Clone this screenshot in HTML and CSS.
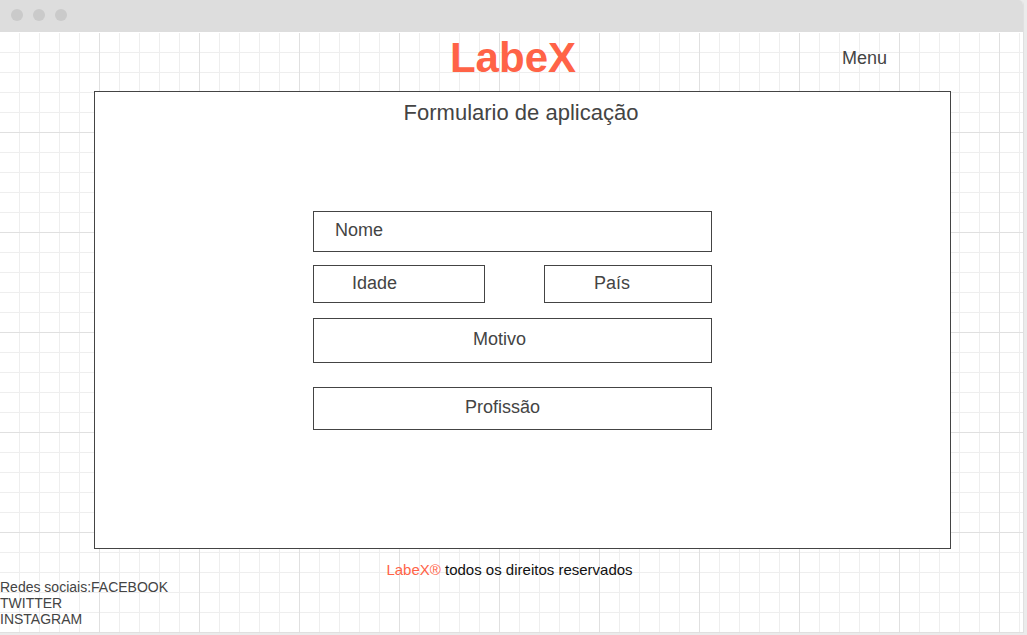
FILE: index.html
```html
<!DOCTYPE html>
<html lang="pt-BR">
<head>
<meta charset="utf-8">
<meta name="viewport" content="width=device-width, initial-scale=1">
<title>LabeX</title>
<link rel="stylesheet" href="styles.css">
</head>
<body>
<div class="window">
  <div class="titlebar">
    <span class="dot"></span>
    <span class="dot"></span>
    <span class="dot"></span>
  </div>
  <div class="page">
    <header class="header">
      <h1 class="logo">LabeX</h1>
      <button class="menu" type="button">Menu</button>
    </header>
    <main class="panel">
      <h2 class="title">Formulario de aplicação</h2>
      <form class="form">
        <input class="field field-name" type="text" placeholder="Nome" aria-label="Nome">
        <div class="row">
          <input class="field field-age" type="text" placeholder="Idade" aria-label="Idade">
          <input class="field field-country" type="text" placeholder="País" aria-label="País">
        </div>
        <input class="field field-reason" type="text" placeholder="Motivo" aria-label="Motivo">
        <input class="field field-job" type="text" placeholder="Profissão" aria-label="Profissão">
      </form>
    </main>
    <footer class="footer">
      <p class="rights"><span class="brand">LabeX®</span> todos os direitos reservados</p>
      <div class="social">
        <span>Redes sociais:</span><a class="link" href="#">FACEBOOK</a><br>
        <a class="link" href="#">TWITTER</a><br>
        <a class="link" href="#">INSTAGRAM</a>
      </div>
    </footer>
  </div>
</div>
</body>
</html>
```
FILE: styles.css
```css
* {
  box-sizing: border-box;
}

body {
  margin: 0;
  padding: 0 3px 2px 0;
  background: #ebebeb;
  color: #444;
  font-family: "Liberation Sans", Arial, sans-serif;
}

.window {
  display: flex;
  flex-direction: column;
  min-height: calc(100vh - 2px);
  border-right: 1px solid #e0e0e0;
  border-radius: 0 5px 0 0;
  background: #fff;
  overflow: hidden;
}

.titlebar {
  display: flex;
  align-items: center;
  gap: 10px;
  height: 32px;
  margin-right: -1px;
  padding: 0 11px 2px;
  background: #ddd;
}

.dot {
  width: 12px;
  height: 12px;
  border-radius: 50%;
  background: #cacaca;
}

.page {
  flex: 1;
  display: flex;
  flex-direction: column;
  margin-top: 1px;
  background-color: #fff;
  background-image:
    linear-gradient(to left, #e0e0e0 1px, transparent 1px),
    linear-gradient(to top, #e0e0e0 1px, transparent 1px),
    linear-gradient(to left, #eee 1px, transparent 1px),
    linear-gradient(to top, #eee 1px, transparent 1px);
  background-size: 100px 100px, 100px 100px, 20px 20px, 20px 20px;
}

.header {
  display: grid;
  grid-template-columns: 1fr auto 1fr;
  align-items: center;
  height: 58px;
  padding: 0 0 8px 3px;
}

.logo {
  grid-column: 2;
  margin: 0;
  color: #ff6347;
  font-size: 42px;
  line-height: 48px;
}

.menu {
  justify-self: end;
  margin-right: 136px;
  padding: 0;
  border: 0;
  background: none;
  color: inherit;
  font: inherit;
  font-size: 18px;
}

.panel {
  flex: 1;
  margin: 0 72px 0 94px;
  padding-top: 8px;
  border: 1px solid #444;
  background: #fff;
}

.title {
  margin: 0;
  padding-right: 3px;
  font-size: 22px;
  font-weight: 400;
  line-height: 26px;
  text-align: center;
}

.form {
  display: flex;
  flex-direction: column;
  max-width: 419px;
  margin: 85px auto 0;
  padding-right: 20px;
}

.row {
  display: grid;
  grid-template-columns: 172fr 168fr;
  gap: 59px;
  margin: 13px 0 15px;
}

.field {
  width: 100%;
  min-width: 0;
  height: 41px;
  margin: 0;
  padding: 0 20px;
  border: 1px solid #444;
  border-radius: 0;
  background: #fff;
  color: #444;
  font: inherit;
  font-size: 18px;
}

.field::placeholder {
  color: #444;
  opacity: 1;
}

.field-name {
  padding: 0 20px 2px 21px;
}

.field-age {
  height: 38px;
  padding: 0 0 2px 38px;
}

.field-country {
  height: 38px;
  padding: 0 0 2px 49px;
}

.field-reason {
  height: 45px;
  padding: 0 26px 2px 0;
  text-align: center;
}

.field-job {
  height: 43px;
  margin-top: 24px;
  padding: 0 20px 2px 0;
  text-align: center;
}

.footer {
  padding: 12px 0 6px;
  font-size: 14px;
  line-height: 16px;
}

.rights {
  margin: 0 0 1px;
  padding-right: 4px;
  color: #111;
  font-size: 15px;
  line-height: 17px;
  text-align: center;
}

.brand {
  color: #ff6347;
}

.link {
  color: inherit;
  text-decoration: none;
}
```
